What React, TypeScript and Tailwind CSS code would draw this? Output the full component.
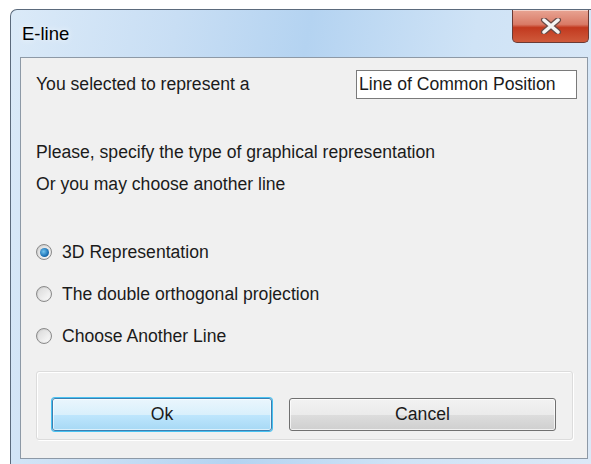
import React from "react";

// Win7-style "E-line" dialog

const options = [
  { label: "3D Representation", checked: true },
  { label: "The double orthogonal projection", checked: false },
  { label: "Choose Another Line", checked: false },
];

function Radio({ checked }: { checked: boolean }) {
  return (
    <span className="flex h-[16px] w-[16px] items-center justify-center rounded-full border border-[#8a8a8a] bg-gradient-to-br from-[#c9c9c9] to-[#f4f4f4]">
      <span className="flex h-[12px] w-[12px] items-center justify-center rounded-full bg-gradient-to-br from-[#dadada] to-[#fafafa]">
        {checked && (
          <span className="h-[9px] w-[9px] rounded-full bg-[radial-gradient(circle_at_40%_40%,#74c6f0_0%,#1d72b5_60%,#0b3e6d_100%)]" />
        )}
      </span>
    </span>
  );
}

function CloseButton() {
  return (
    <div className="flex h-[33px] w-[77px] items-center justify-center rounded-b-[5px] border border-t-0 border-[#6b3a34] bg-[linear-gradient(to_bottom,#e8a493_0%,#d97a66_45%,#c2391f_55%,#cf5a3b_100%)] shadow-[inset_0_1px_0_rgba(255,255,255,0.5)]">
      <svg width="22" height="16" viewBox="0 0 22 16">
        <path
          d="M4 2 L18 14 M18 2 L4 14"
          stroke="#6a4a46"
          strokeWidth="6"
          strokeLinecap="round"
        />
        <path
          d="M4 2 L18 14 M18 2 L4 14"
          stroke="#f4f4f4"
          strokeWidth="3.5"
          strokeLinecap="round"
        />
      </svg>
    </div>
  );
}

export default function App() {
  return (
    <div className="relative h-[464px] w-[591px] overflow-hidden bg-white font-['Liberation_Sans',Arial,sans-serif] text-[17.6px] text-[#1b1b1b]">
      <div className="ml-[10px] mt-[9px] h-[470px] w-[588px] rounded-tl-[7px] border border-r-0 border-[#5b6a7c] bg-[linear-gradient(100deg,#dbeaf8_0%,#c8def4_25%,#b4d3f1_45%,#cfe3f6_70%,#dce9f7_100%)]">
        {/* title bar */}
        <div className="flex h-[47px] items-start justify-between">
          <span className="ml-[11px] mt-[12px] text-[18.5px] leading-[24px] text-black [text-shadow:0_0_6px_rgba(255,255,255,0.9)]">
            E-line
          </span>
          <div className="mr-[9px]">
            <CloseButton />
          </div>
        </div>

        {/* client area */}
        <div className="ml-[9px] h-[402px] w-[568px] border border-[#8d99a6] bg-[#f0f0f0]">
          <div className="mt-[12px] flex h-[29px] items-center justify-between pl-[15px] pr-[10px]">
            <span>You selected to represent a</span>
            <div className="flex h-[29px] w-[221px] items-center border border-[#7a7a7a] bg-white pl-[2px]">
              Line of Common Position
            </div>
          </div>

          <div className="mt-[42px] pl-[15px] leading-[22px]">
            Please, specify the type of graphical representation
          </div>
          <div className="mt-[10px] pl-[15px] leading-[22px]">
            Or you may choose another line
          </div>

          <div className="mt-[45px] flex flex-col gap-[18px] pl-[15px]">
            {options.map((o) => (
              <label key={o.label} className="flex h-[24px] items-center gap-[10px]">
                <Radio checked={o.checked} />
                <span>{o.label}</span>
              </label>
            ))}
          </div>

          {/* button panel */}
          <div className="ml-[15px] mt-[23px] flex w-[537px] gap-[17px] rounded-[3px] border border-[#dcdcdc] px-[15px] pb-[8px] pt-[26px] shadow-[inset_1px_1px_0_#ffffff,1px_1px_0_#ffffff]">
            <button className="flex h-[33px] w-[220px] items-center justify-center rounded-[3px] border border-[#3c7fb1] bg-[linear-gradient(to_bottom,#eaf6fd_0%,#d9f0fc_50%,#bee6fd_51%,#a7d9f5_100%)] shadow-[0_0_0_1px_#48c2f2,inset_0_0_0_1px_rgba(255,255,255,0.6)]">
              Ok
            </button>
            <button className="flex h-[33px] w-[267px] items-center justify-center rounded-[3px] border border-[#707070] bg-[linear-gradient(to_bottom,#f2f2f2_0%,#ebebeb_50%,#dddddd_51%,#cfcfcf_100%)] shadow-[inset_0_0_0_1px_rgba(255,255,255,0.7)]">
              Cancel
            </button>
          </div>
        </div>
      </div>
    </div>
  );
}
